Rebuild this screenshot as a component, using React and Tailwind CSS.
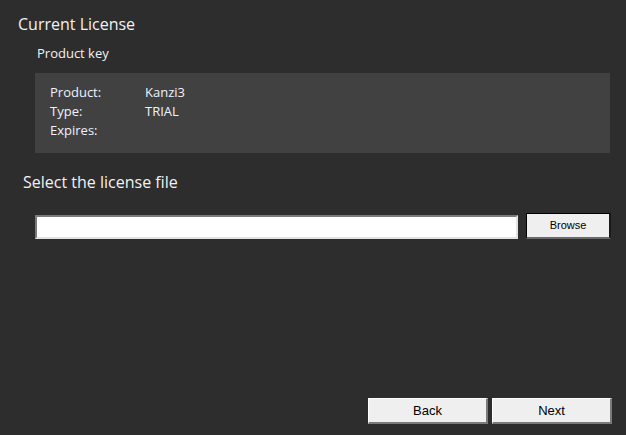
import React from "react";

const ui = { fontFamily: '"Open Sans", "Noto Sans", sans-serif' };
const classic = { fontFamily: '"Liberation Sans", Arial, sans-serif' };

const Button3D = ({ label, className }) => (
  <button
    style={classic}
    className={`bg-[#efefef] text-black border-t border-l border-t-[#ffffff] border-l-[#ffffff] border-b-2 border-r-2 border-b-[#7a7a7a] border-r-[#7a7a7a] ${className}`}
  >
    {label}
  </button>
);

export default function App() {
  return (
    <div style={ui} className="w-[626px] h-[435px] bg-[#2d2d2d] text-[#f2f2f2] flex flex-col">
      {/* Current license */}
      <div className="ml-[18px] mt-[13px] text-[16px] leading-[22px]">Current License</div>
      <div className="ml-[37px] mt-[9px] text-[13px] leading-[18px]">Product key</div>

      <div className="ml-[35px] mt-[11px] w-[575px] h-[80px] bg-[#414141] pt-[10px] pl-[15px] text-[13px] leading-[19px] text-[#eef2ff]">
        <div className="grid grid-cols-[95px_1fr]">
          <span>Product:</span>
          <span>Kanzi3</span>
          <span>Type:</span>
          <span>TRIAL</span>
          <span>Expires:</span>
          <span></span>
        </div>
      </div>

      {/* License file */}
      <div className="ml-[23px] mt-[18px] text-[16px] leading-[22px]">Select the license file</div>
      <div className="flex items-end mt-[20px] ml-[35px]">
        <input
          type="text"
          className="w-[483px] h-[24px] bg-white border-2 border-t-[#7a7a7a] border-l-[#7a7a7a] border-b-[#e3e3e3] border-r-[#e3e3e3] outline-none"
        />
        <button
          style={classic}
          className="ml-[8px] w-[85px] h-[26px] bg-[#efefef] text-black text-[11px] border-t border-l border-t-black border-l-black border-b-2 border-r-2 border-b-[#6a6a6a] border-r-[#1a1a1a]"
        >
          Browse
        </button>
      </div>

      <div className="flex-1" />

      {/* Navigation */}
      <div className="flex justify-end gap-[4px] pr-[14px] pb-[11px]">
        <Button3D label="Back" className="w-[120px] h-[26px] text-[13px]" />
        <Button3D label="Next" className="w-[120px] h-[26px] text-[13px]" />
      </div>
    </div>
  );
}
